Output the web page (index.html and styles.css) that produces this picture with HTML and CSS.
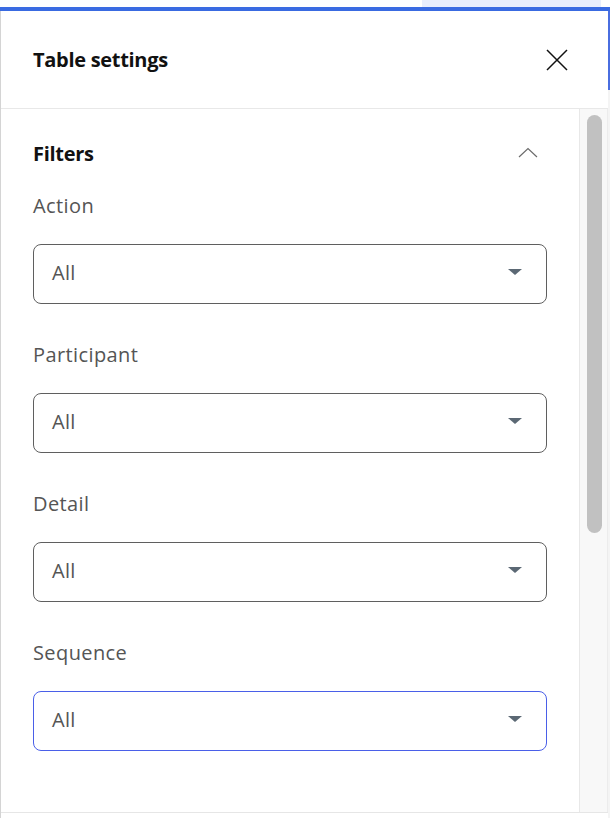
FILE: index.html
```html
<!DOCTYPE html>
<html>
<head>
<meta charset="utf-8">
<link rel="stylesheet" href="styles.css">
</head>
<body>
<div class="topbar"><div class="top-spacer"></div><div class="top-tab"></div></div>
<div class="blueline"></div>
<div class="frame">
  <div class="panel">
    <div class="header">
      <h1 class="title">Table settings</h1>
      <button class="close" aria-label="Close">
        <svg width="22" height="22" viewBox="0 0 22 22"><path d="M1 1 L21 21 M21 1 L1 21" stroke="#111" stroke-width="1.5" fill="none"/></svg>
      </button>
    </div>
    <div class="body">
      <div class="content">
        <div class="section-head">
          <h2 class="section-title">Filters</h2>
          <svg class="chevron" width="20" height="11" viewBox="0 0 20 11"><path d="M1 10 L10 1.5 L19 10" stroke="#6b6b6b" stroke-width="1.2" fill="none"/></svg>
        </div>
        <div class="field">
          <div class="label">Action</div>
          <div class="select"><span class="value">All</span><span class="caret"></span></div>
        </div>
        <div class="field">
          <div class="label">Participant</div>
          <div class="select"><span class="value">All</span><span class="caret"></span></div>
        </div>
        <div class="field">
          <div class="label">Detail</div>
          <div class="select"><span class="value">All</span><span class="caret"></span></div>
        </div>
        <div class="field">
          <div class="label">Sequence</div>
          <div class="select focused"><span class="value">All</span><span class="caret"></span></div>
        </div>
      </div>
      <div class="track"><div class="thumb"></div></div>
    </div>
    <div class="footer"></div>
  </div>
  <div class="edge"><div class="edge-blue"></div></div>
</div>
</body>
</html>
```
FILE: styles.css
```css
* { box-sizing: border-box; }
html, body { margin: 0; padding: 0; background: #fff; }
body {
  width: 610px;
  height: 818px;
  overflow: hidden;
  font-family: "Open Sans", "Noto Sans", sans-serif;
}
.topbar { display: flex; height: 7px; }
.top-spacer { width: 422px; }
.top-tab { width: 179px; background: #e8eefd; }
.blueline { height: 4px; background: #3a6be2; }
.frame { display: flex; height: 807px; }
.panel {
  width: 608px;
  border-left: 1px solid #d4d4d4;
  display: flex;
  flex-direction: column;
  box-shadow: 0 2px 4px rgba(0,0,0,0.06);
}
.header {
  height: 98px;
  flex: none;
  display: flex;
  align-items: center;
  justify-content: space-between;
  padding: 0 40px 0 32px;
  border-bottom: 1px solid #e8e8e8;
}
.title { margin: 0; font-size: 20px; font-weight: 700; color: #111; line-height: 28px; letter-spacing: -0.3px; }
.close { border: 0; background: none; padding: 0; width: 22px; height: 22px; display: flex; }
.body { flex: 1; display: flex; min-height: 0; }
.content { flex: 1; padding: 31px 32px 0 32px; }
.section-head {
  display: flex;
  align-items: center;
  justify-content: space-between;
  height: 28px;
  padding-right: 9px;
  margin-bottom: 24px;
}
.section-title { margin: 0; font-size: 20px; font-weight: 700; color: #111; line-height: 28px; letter-spacing: -0.3px; }
.chevron { display: block; margin-top: -3px; }
.field { margin-bottom: 37px; }
.label { font-size: 20px; line-height: 28px; color: #555; margin-bottom: 24px; letter-spacing: 0.4px; }
.select {
  height: 60px;
  border: 1px solid #5f5f5f;
  border-radius: 8px;
  display: flex;
  align-items: center;
  justify-content: space-between;
  padding: 0 24px 0 18px;
}
.select.focused { border-color: #4a5fe8; }
.value { font-size: 20px; color: #555; line-height: 28px; margin-top: -2px; letter-spacing: 0.3px; }
.caret {
  width: 0; height: 0;
  border-left: 7.5px solid transparent;
  border-right: 7.5px solid transparent;
  border-top: 6px solid #5b6874;
  margin-top: -4px;
}
.track {
  width: 29px;
  flex: none;
  background: #f8f8f8;
  border-left: 1px solid #e8e8e8;
  border-right: 1px solid #ececec;
  padding: 6px 5px 0 7px;
}
.thumb { height: 418px; background: #c1c1c1; border-radius: 8px; }
.footer { height: 6px; flex: none; border-top: 1px solid #e6e6e6; }
.edge { width: 2px; background: #f4f4f4; }
.edge-blue { height: 79px; background: #4a6ee0; }
```
